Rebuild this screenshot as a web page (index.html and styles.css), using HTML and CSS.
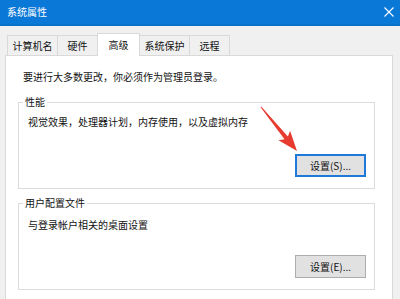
FILE: index.html
```html
<!DOCTYPE html>
<html lang="zh-CN">
<head>
    <meta charset="UTF-8">
    <title>系统属性</title>
    <link rel="stylesheet" href="styles.css">
</head>
<body>
    <div class="janela">
        <div class="barra-titulo">
            <span class="titulo">系统属性</span>
            <svg class="fechar" width="10" height="10" viewBox="0 0 10 10">
                <path d="M0.5 0.5 L9.5 9.5 M9.5 0.5 L0.5 9.5" stroke="#fff" stroke-width="1.1" fill="none"/>
            </svg>
        </div>

        <div class="abas">
            <div class="aba aba-larga">计算机名</div>
            <div class="aba">硬件</div>
            <div class="aba aba-ativa">高级</div>
            <div class="aba aba-larga">系统保护</div>
            <div class="aba">远程</div>
        </div>

        <div class="painel">
            <p class="aviso">要进行大多数更改，你必须作为管理员登录。</p>

            <!-- Grupo desempenho -->
            <fieldset class="grupo">
                <legend>性能</legend>
                <p class="descricao">视觉效果，处理器计划，内存使用，以及虚拟内存</p>
                <div class="linha-botao">
                    <button class="botao botao-foco">设置(S)...</button>
                </div>
            </fieldset>

            <!-- Grupo perfil -->
            <fieldset class="grupo grupo-perfil">
                <legend>用户配置文件</legend>
                <p class="descricao">与登录帐户相关的桌面设置</p>
                <div class="linha-botao">
                    <button class="botao">设置(E)...</button>
                </div>
            </fieldset>
        </div>

        <svg class="seta" width="400" height="299" viewBox="0 0 400 299">
            <polygon points="261.4,106.7 287.9,136.4 290.1,130.8 297,151 278.5,140.2 284.5,139.2 260.6,107.3" fill="#e63b2e"/>
        </svg>
    </div>
</body>
</html>
```

FILE: styles.css
```css
* {
    margin: 0;
    padding: 0;
    box-sizing: border-box;
    font-family: "Noto Sans CJK SC", "Noto Sans", sans-serif;
}

body {
    background-color: #f0f0f0;
}

.janela {
    position: relative;
    width: 400px;
    height: 299px;
    overflow: hidden;
    display: flex;
    flex-direction: column;
    background-color: #f0f0f0;
    font-size: 10px;
    color: #111;
}

.barra-titulo {
    height: 26px;
    flex-shrink: 0;
    background-color: #0a78d7;
    border-bottom: 2px solid #0870c9;
    display: flex;
    align-items: center;
    padding-left: 7px;
}

.titulo {
    color: white;
    font-size: 10px;
    line-height: 14px;
}

.fechar {
    margin-left: auto;
    margin-right: 6px;
}

.abas {
    display: flex;
    align-items: flex-end;
    padding: 7px 0 0 7px;
    flex-shrink: 0;
}

.aba {
    width: 41px;
    height: 20px;
    line-height: 19px;
    text-align: center;
    border: 1px solid #d9d9d9;
    border-bottom: none;
    background-color: #f0f0f0;
    margin-left: -1px;
}

.aba:first-child {
    margin-left: 0;
}

.aba-larga {
    width: 51px;
}

.aba-ativa {
    position: relative;
    z-index: 1;
    width: 43px;
    height: 23px;
    line-height: 21px;
    background-color: white;
    margin-bottom: -1px;
}

.painel {
    height: 260px;
    flex-shrink: 0;
    margin: 0 7px 0 5px;
    background-color: white;
    border: 1px solid #d9d9d9;
    padding: 14px 17px 0 12px;
}

.aviso {
    line-height: 14px;
    padding-left: 5px;
    margin-bottom: 11px;
}

.grupo {
    border: 1px solid #dcdcdc;
    padding: 0 8px 11px 9px;
}

.grupo legend {
    line-height: 14px;
    padding: 0 2px;
    margin-left: -5px;
}

.grupo-perfil {
    margin-top: 7px;
}

.descricao {
    line-height: 14px;
    margin-top: 6px;
}

.grupo-perfil .descricao {
    margin-top: 8px;
}

.linha-botao {
    display: flex;
    justify-content: flex-end;
    margin-top: 25px;
}

.grupo-perfil .linha-botao {
    margin-top: 23px;
}

.botao {
    width: 71px;
    height: 23px;
    font-size: 10px;
    color: #111;
    background-color: #e1e1e1;
    border: 1px solid #adadad;
}

.botao-foco {
    border: 2px solid #1d7ad8;
}

/* Seta vermelha por cima */
.seta {
    position: absolute;
    top: 0;
    left: 0;
    pointer-events: none;
}
```
